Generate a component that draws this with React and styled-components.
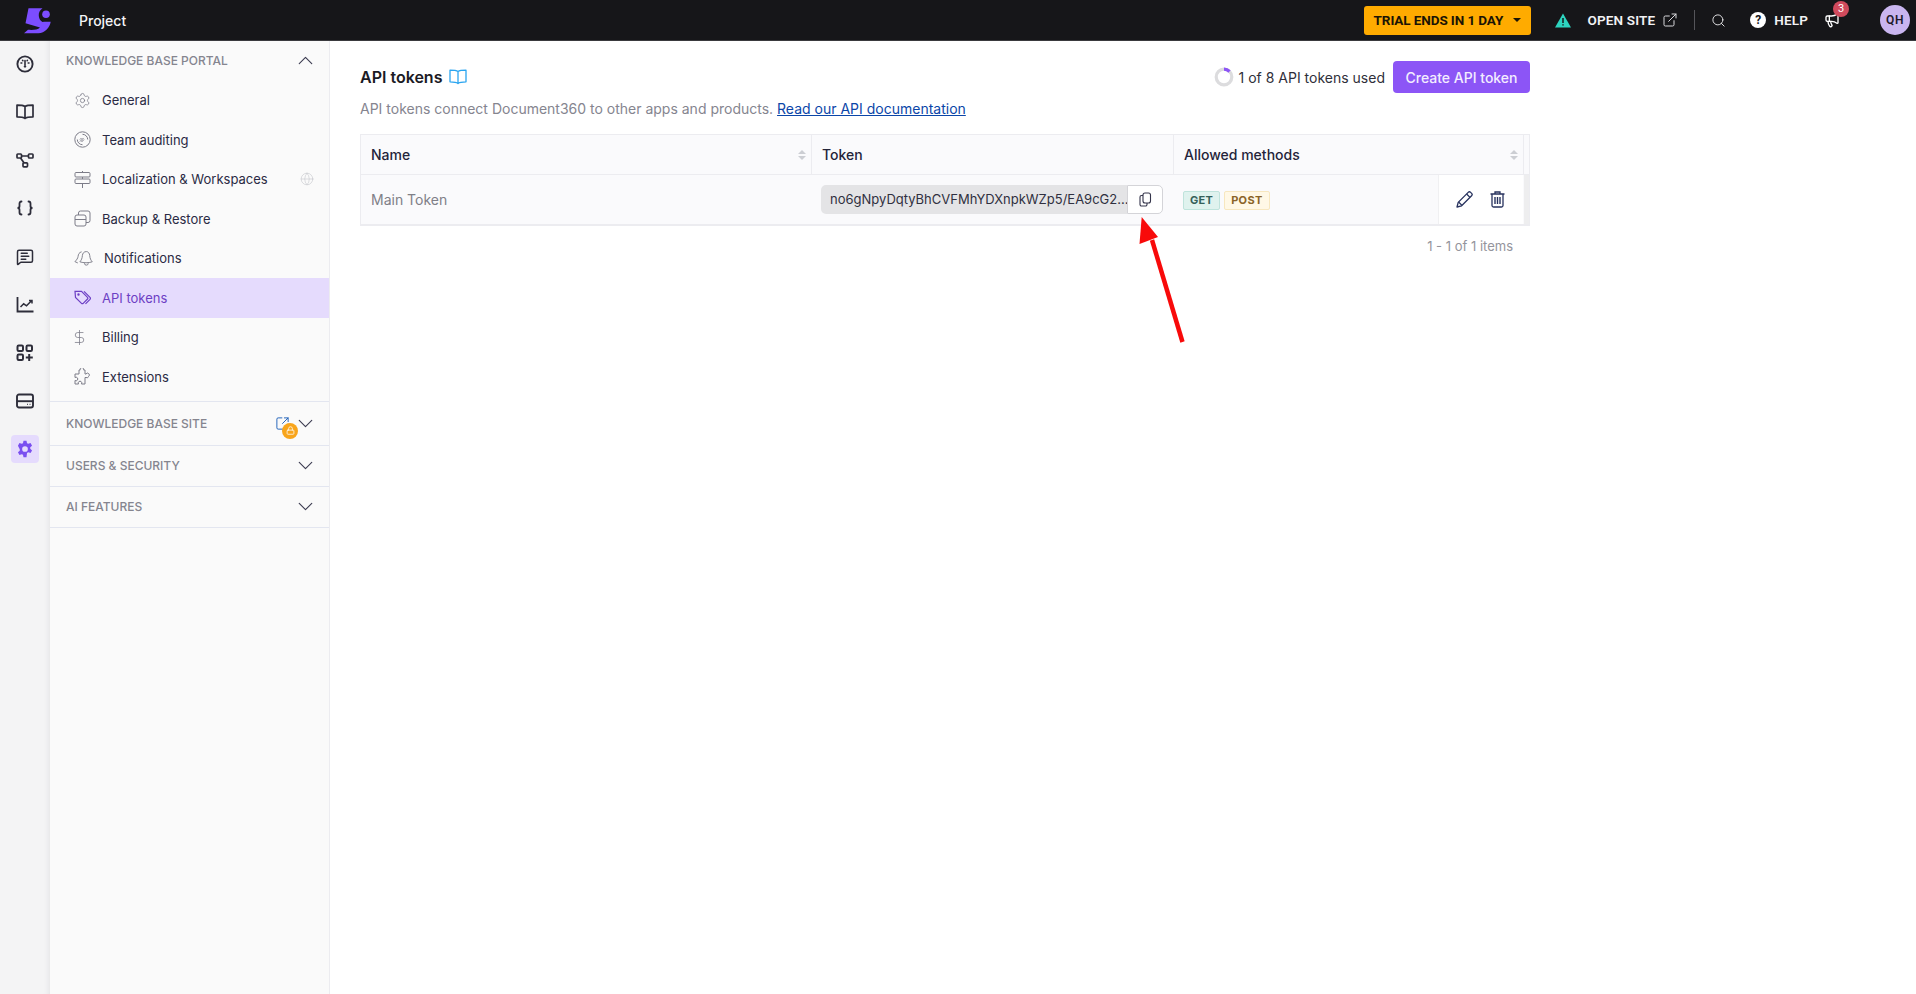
import React from 'react'
import styled, { createGlobalStyle } from 'styled-components'
import {
  MessageSquareText, Search, ExternalLink, ChevronUp, ChevronDown,
  Globe, DollarSign, Megaphone, Settings, SquareArrowOutUpRight, Lock,
} from 'lucide-react'

const GlobalStyle = createGlobalStyle`
  html, body { margin: 0; padding: 0; height: 100%; background: #fff; }
  #root { height: 100%; }
  * { box-sizing: border-box; }
  body { font-family: Inter, "Liberation Sans", sans-serif; color: #2a2a3c; }
`

const Page = styled.div`
  position: relative;
  width: 1916px;
  height: 994px;
  display: flex;
  flex-direction: column;
  overflow: hidden;
`

const TopBar = styled.header`
  height: 41px;
  flex: none;
  background: #161619;
  border-bottom: 1px solid #3a3a3e;
  display: flex;
  align-items: center;
  padding: 0 6px 0 23px;
  color: #fff;
`

const ProjectName = styled.span`
  margin-left: 28px;
  font-size: 14px;
  font-weight: 500;
  color: #f4f4f6;
`

const TopRight = styled.div`
  margin-left: auto;
  display: flex;
  align-items: center;
`

const TrialButton = styled.button`
  width: 167px;
  height: 29px;
  border: none;
  border-radius: 3px;
  background: #ffab00;
  color: #1b1405;
  font: 700 13.5px Roboto, "Liberation Sans", sans-serif;
  letter-spacing: -0.1px;
  display: flex;
  align-items: center;
  justify-content: space-between;
  padding: 0 10px;
  white-space: nowrap;
`

const Caret = styled.i`
  width: 0;
  height: 0;
  border-left: 4px solid transparent;
  border-right: 4px solid transparent;
  border-top: 4px solid #1b1405;
`

const BarLabel = styled.span`
  margin-left: ${p => p.$ml}px;
  font: 600 13.5px Roboto, "Liberation Sans", sans-serif;
  letter-spacing: 0.15px;
  color: #f2f2f4;
  white-space: nowrap;
`

const BarIcon = styled.span`
  display: flex;
  margin-left: ${p => p.$ml}px;
  color: ${p => p.$color || '#fff'};
`

const BarDivider = styled.i`
  width: 1px;
  height: 20px;
  margin-left: 16px;
  background: #55555a;
`

const HelpDot = styled.i`
  width: 16px;
  height: 16px;
  margin-left: 24px;
  border-radius: 50%;
  background: #fff;
  color: #161619;
  font: 700 12px/16px Roboto, sans-serif;
  text-align: center;
`

const BellWrap = styled.span`
  position: relative;
  display: flex;
  margin-left: 16px;
  color: #fff;
`

const Badge = styled.span`
  position: absolute;
  top: -11px;
  left: 9px;
  width: 16px;
  height: 16px;
  border-radius: 50%;
  background: #d04a5c;
  color: #fff;
  font: 400 11px/16px Roboto, sans-serif;
  text-align: center;
`

const Avatar = styled.span`
  width: 30px;
  height: 30px;
  margin-left: 40px;
  border-radius: 50%;
  background: #c9b5ef;
  color: #1d1a2a;
  font: 600 12px/30px Roboto, sans-serif;
  letter-spacing: 0.5px;
  text-align: center;
`

const Body = styled.div`
  flex: 1;
  display: flex;
  min-height: 0;
`

const Rail = styled.nav`
  width: 50px;
  flex: none;
  background: #f4f4f5;
  box-shadow: inset -6px 0 6px -6px #dcdcdf;
  display: flex;
  flex-direction: column;
  align-items: center;
  padding-top: 9px;
  gap: 20.15px;
`

const RailItem = styled.span`
  width: 28px;
  height: 28px;
  border-radius: 4px;
  display: flex;
  align-items: center;
  justify-content: center;
  color: #2d2d3a;
  background: ${p => (p.$active ? '#e5dbfd' : 'transparent')};
`

const Sidebar = styled.aside`
  width: 280px;
  flex: none;
  background: #fafafa;
  border-right: 1px solid #ececf0;
`

const SectionHead = styled.div`
  display: flex;
  align-items: center;
  height: ${p => p.$h}px;
  padding: 0 11px 0 16px;
  border-bottom: ${p => (p.$open ? 'none' : '1px solid #e3e6f0')};
  font-size: 12px;
  font-weight: 500;
  color: #85858f;
`

const SectionIcons = styled.span`
  margin-left: auto;
  display: flex;
  align-items: center;
  color: #3d3d52;
`

const LinkBadge = styled.span`
  position: relative;
  display: flex;
  margin-right: 3px;
  color: #1d5fb8;
`

const LockDot = styled.span`
  position: absolute;
  left: 7px;
  top: 7px;
  width: 16px;
  height: 16px;
  border-radius: 50%;
  background: #f8a51c;
  color: #fff;
  display: flex;
  align-items: center;
  justify-content: center;
`

const MenuList = styled.div`
  padding-bottom: 4px;
  border-bottom: 1px solid #e3e6f0;
`

const MenuRow = styled.div`
  height: 39.5px;
  display: flex;
  align-items: center;
  padding: 0 15px 0 24px;
  gap: 11px;
  font-size: 13px;
  color: ${p => (p.$active ? '#6d3fc4' : '#2a2a44')};
  background: ${p => (p.$active ? '#e5dbfd' : 'transparent')};
  svg { color: ${p => (p.$active ? '#6d3fc4' : '#7c7c88')}; flex: none; }
`

const BillingIcon = styled(DollarSign)`
  margin: 0 3px 0 -3px;
`

const RowTail = styled.span`
  margin-left: auto;
  display: flex;
  svg { color: #c4c6cc; }
`

const Main = styled.main`
  flex: 1;
  padding: 20px 0 0 30px;
`

const Content = styled.div`
  width: 1170px;
`

const TitleRow = styled.div`
  height: 32px;
  display: flex;
  align-items: center;
`

const Title = styled.h1`
  margin: 0 7px 0 0;
  font-size: 16px;
  font-weight: 600;
  color: #1a1a24;
`

const BookLink = styled.span`
  display: flex;
  color: #2aa5f0;
`

const Usage = styled.span`
  margin-left: auto;
  display: flex;
  align-items: center;
  gap: 5px;
  font-size: 14px;
  color: #2f2f3a;
`

const PrimaryButton = styled.button`
  margin-left: 8px;
  width: 137px;
  height: 32px;
  border: none;
  border-radius: 4px;
  background: #8c55f6;
  color: #f3edff;
  font: 500 14px Inter, sans-serif;
`

const Intro = styled.p`
  margin: 6px 0 15px;
  height: 20px;
  font-size: 14px;
  line-height: 20px;
  color: #85858f;
`

const DocLink = styled.a`
  color: #0b46a8;
  text-decoration: underline;
`

const Table = styled.div`
  border: 1px solid #ececf0;
  border-bottom-width: 2px;
  background: #fafafc;
`

const TableRow = styled.div`
  display: grid;
  grid-template-columns: 451px 362px 350px 5px;
  height: ${p => p.$h}px;
  border-bottom: ${p => (p.$head ? '1px solid #ececf0' : 'none')};
`

const HeadCell = styled.div`
  display: flex;
  align-items: center;
  justify-content: space-between;
  padding: 0 5px 0 10px;
  border-right: 1px solid #ececf0;
  font-size: 14px;
  font-weight: 500;
  color: #24243a;
`

const SortIcon = styled.span`
  display: flex;
  flex-direction: column;
  gap: 2px;
  &::before, &::after {
    content: '';
    border-left: 4px solid transparent;
    border-right: 4px solid transparent;
  }
  &::before { border-bottom: 4.5px solid #ccced3; }
  &::after { border-top: 4.5px solid #ccced3; }
`

const NameCell = styled.div`
  display: flex;
  align-items: center;
  padding-left: 10px;
  font-size: 14px;
  color: #7f7f88;
`

const TokenCell = styled.div`
  display: flex;
  align-items: center;
  padding: 0 11px 0 9px;
`

const TokenValue = styled.span`
  flex: 1;
  min-width: 0;
  height: 29px;
  line-height: 28px;
  padding-left: 9px;
  border-radius: 5px 0 0 5px;
  background: #e4e4e6;
  font-size: 13px;
  color: #303040;
  white-space: nowrap;
`

const CopyButton = styled.span`
  width: 36px;
  height: 29px;
  flex: none;
  background: #fff;
  border: 1px solid #d4d4d8;
  border-radius: 0 5px 5px 0;
  display: flex;
  align-items: center;
  justify-content: center;
  color: #34344a;
`

const MethodCell = styled.div`
  display: flex;
  align-items: center;
  justify-content: space-between;
  padding: 0 1px 0 9px;
`

const Methods = styled.span`
  display: flex;
  gap: 4px;
  margin-top: 1px;
`

const Method = styled.span`
  height: 19px;
  padding: 0 6px;
  border-radius: 2px;
  border: 1px solid ${p => (p.$kind === 'get' ? '#bfe3dc' : '#f7e7bf')};
  background: ${p => (p.$kind === 'get' ? '#dff2ee' : '#fff8e6')};
  color: ${p => (p.$kind === 'get' ? '#35605a' : '#8a6428')};
  font-size: 11px;
  font-weight: 700;
  letter-spacing: 0.3px;
  line-height: 17px;
`

const Actions = styled.div`
  width: 85px;
  height: 49px;
  padding-right: 2px;
  background: #fff;
  border-left: 1px solid #f0f0f2;
  display: flex;
  align-items: center;
  justify-content: center;
  gap: 17px;
  color: #27325e;
`

const Gutter = styled.div`
  background: #eeeeef;
`

const Pager = styled.div`
  margin: 12px 17px 0 0;
  text-align: right;
  font-size: 13px;
  color: #94949c;
`

const Arrow = styled.svg`
  position: absolute;
  left: 1130px;
  top: 210px;
`

const GaugeIcon = () => (
  <svg width="18" height="18" viewBox="0 0 18 18" fill="none" stroke="currentColor" strokeWidth="1.9">
    <circle cx="9" cy="9" r="7.6" />
    <path d="M9 5.5v4.5M5 8h.8M12.2 8h.8M6.6 5.4l.3.3M11.4 5.4l-.3.3" strokeWidth="1.6" strokeLinecap="round" />
    <circle cx="9" cy="11.4" r="1.2" fill="currentColor" stroke="none" />
  </svg>
)

const OpenBook = ({ width = 18, height = 16, strokeWidth = 1.7 }) => (
  <svg width={width} height={height} viewBox="0 0 18 16" fill="none" stroke="currentColor" strokeWidth={strokeWidth} strokeLinejoin="round">
    <path d="M9 2.500C7.500 1.500 5 1.200 1 1.200v11.600c4 0 6.500.3 8 1.700 1.500-1.400 4-1.700 8-1.700V1.200c-4 0-6.500.3-8 1.300zM9 2.500v12" />
  </svg>
)

const FlowIcon = () => (
  <svg width="18" height="15" viewBox="0 0 18 15" fill="none" stroke="currentColor" strokeWidth="1.7">
    <rect x="1" y="1" width="4.500" height="4" rx="0.8" />
    <rect x="12.500" y="1" width="4.500" height="4" rx="0.8" />
    <rect x="7" y="9.800" width="4.500" height="4" rx="0.8" />
    <path d="M5.500 3h7M4.500 5l3.500 4.800" />
  </svg>
)

const CurlyIcon = () => (
  <svg width="18" height="16" viewBox="0 0 18 16" fill="none" stroke="currentColor" strokeWidth="1.8" strokeLinecap="round">
    <path d="M5.500 1.500C4 1.500 3.500 2.200 3.500 3.500v2.800C3.500 7.300 2.800 8 1.500 8c1.300 0 2 .7 2 1.700v2.800c0 1.300.5 2 2 2" />
    <path d="M12.500 1.500c1.500 0 2 .7 2 2v2.800c0 1 .7 1.700 2 1.700-1.300 0-2 .7-2 1.700v2.800c0 1.300-.5 2-2 2" />
  </svg>
)

const TrendIcon = () => (
  <svg width="18" height="17" viewBox="0 0 18 17" fill="none" stroke="currentColor" strokeWidth="1.8">
    <path d="M1.500 1v14.500H17.500" />
    <path d="M4.500 11l3.200-3.200 2.800 2 5-5M13 4.500h3v3" strokeWidth="1.500" />
  </svg>
)

const AppsIcon = () => (
  <svg width="18" height="18" viewBox="0 0 18 18" fill="none" stroke="currentColor" strokeWidth="2">
    <rect x="1.500" y="1.500" width="5.500" height="5.500" rx="1.200" />
    <rect x="10.500" y="1.500" width="5.500" height="5.500" rx="1.200" />
    <rect x="1.500" y="10.500" width="5.500" height="5.500" rx="1.200" />
    <path d="M13.200 10v7M9.800 13.400h7" />
  </svg>
)

const DriveIcon = () => (
  <svg width="18" height="16" viewBox="0 0 18 16" fill="none" stroke="currentColor" strokeWidth="1.900">
    <rect x="1" y="1.500" width="16" height="13" rx="2" />
    <path d="M1 8.200h16" />
    <path d="M11 11.400h.8M13.600 11.400h.8" strokeWidth="1.400" />
  </svg>
)

const CogFilled = () => (
  <svg width="18" height="18" viewBox="0 0 24 24" fill="#7a4ff0">
    <path fillRule="evenodd" d="M10 1h4l.7 3.200 1.600.9 3.100-1 2 3.500-2.400 2.200v1.900l2.400 2.200-2 3.500-3.100-1-1.600.9L14 23h-4l-.7-3.200-1.600-.9-3.100 1-2-3.500 2.400-2.200v-1.900L2.600 7.600l2-3.500 3.100 1 1.600-.9zM12 8.200a3.800 3.800 0 1 0 0 7.600 3.800 3.800 0 0 0 0-7.600z" />
  </svg>
)

const Logo = () => (
  <svg width="28" height="27" viewBox="0 0 28 27" fill="#7c4dff">
    <path d="M5.500 1.300h14C16.500 3.500 15.500 6 15.800 9c.3 3 1.700 5 3.700 6l1.500-.3h6.700C27 20 22 26.300 15.300 26.300H1L5 22.800c5 .2 9.500.2 12-2.300L2.500 16.300z" />
    <circle cx="23" cy="7.300" r="3.800" />
  </svg>
)

const AuditIcon = () => (
  <svg width="17" height="17" viewBox="0 0 17 17" fill="none" stroke="currentColor" strokeWidth="1">
    <circle cx="8.500" cy="8.500" r="7.700" />
    <path d="M8.500 3.300a5.200 5.200 0 0 1 5.200 5.200M3.300 8.500a5.200 5.200 0 0 0 5.200 5.200" />
    <path d="M6 10.500l3.500-3.500M7.500 11l2.500-2.500M6 8.500l1.500-1.500" />
  </svg>
)

const LocalizeIcon = () => (
  <svg width="17" height="17" viewBox="0 0 17 17" fill="none" stroke="currentColor" strokeWidth="1">
    <rect x="1" y="1.500" width="15" height="4.500" rx="1" />
    <rect x="1" y="8" width="15" height="4.500" rx="1" />
    <path d="M8.500 0v1.500M8.500 6v2M8.500 12.500V17" />
  </svg>
)

const BackupIcon = () => (
  <svg width="17" height="17" viewBox="0 0 17 17" fill="none" stroke="currentColor" strokeWidth="1">
    <rect x="1" y="5" width="11" height="11" rx="2" />
    <path d="M1 9.500h11M4.500 5V3a2 2 0 0 1 2-2H14a2 2 0 0 1 2 2v7.500a2 2 0 0 1-2 2h-2" />
  </svg>
)

const BellsIcon = () => (
  <svg width="19" height="17" viewBox="0 0 20 17" fill="none" stroke="currentColor" strokeWidth="1">
    <path d="M8 1.500C5.500 2 4.500 4 4.300 6.300 4 8.500 2.800 9.800 1 11.800l3 1.400" />
    <path d="M13 1.200c-2.500 0-4 1.800-4.200 4.300-.2 3-1 4.500-2.600 6.500 4 1.300 9 1.300 13 0-1.600-2-2.400-3.500-2.600-6.500-.2-2.500-1.700-4.300-3.600-4.300z" />
    <path d="M11 13.500a2 2 0 0 0 4 0" />
  </svg>
)

const TagsIcon = () => (
  <svg width="17" height="15" viewBox="0 0 17 15" fill="none" stroke="currentColor" strokeWidth="1.200">
    <path d="M1 1.300h6.500l6 6a1.200 1.200 0 0 1 0 1.700l-4.300 4.300a1.200 1.200 0 0 1-1.700 0L1.500 7.500z" />
    <path d="M10 1.300l6 6a1.500 1.500 0 0 1 0 2l-4.500 4.500" />
    <circle cx="4.500" cy="4.500" r="0.600" />
  </svg>
)

const PuzzleIcon = () => (
  <svg width="17" height="17" viewBox="0 0 17 17" fill="none" stroke="currentColor" strokeWidth="1">
    <path d="M1 6h4V2h1.200a1.800 1.800 0 1 1 3.400 0H11v4h1a1.800 1.800 0 1 1 2.600 2.400 1.800 1.800 0 0 1-2.600 1.100h-1V16H7.500a1.800 1.800 0 1 0-3 0H1v-3.500a1.800 1.800 0 1 0 0-3z" />
  </svg>
)

const CopyIcon = () => (
  <svg width="14" height="15" viewBox="0 0 14 15" fill="none" stroke="currentColor" strokeWidth="1.100">
    <rect x="5" y="1" width="7.500" height="10" rx="2" />
    <path d="M5 3.500H3.500A1.500 1.500 0 0 0 2 5v7.500A1.500 1.500 0 0 0 3.500 14h4A1.500 1.500 0 0 0 9 12.500V11" />
  </svg>
)

const PencilIcon = () => (
  <svg width="17" height="17" viewBox="0 0 17 17" fill="none" stroke="currentColor" strokeWidth="1.300" strokeLinejoin="round">
    <path d="M1 16l1.200-4.600L12.200 1.400a1.700 1.700 0 0 1 2.400 0l1 1a1.700 1.700 0 0 1 0 2.400l-10 10z" />
    <path d="M10.600 3l3.400 3.400M2.600 11l3.400 3.400" />
  </svg>
)

const TrashIcon = () => (
  <svg width="15" height="17" viewBox="0 0 15 17" fill="none" stroke="currentColor" strokeWidth="1.300">
    <path d="M0.500 3h14M5 3V1h5v2M2 3v11.500A1.500 1.500 0 0 0 3.500 16h8a1.500 1.500 0 0 0 1.500-1.500V3" />
    <path d="M5 6v7M7.500 6v7M10 6v7" strokeWidth="1.400" />
  </svg>
)

const AlertIcon = () => (
  <svg width="16" height="15" viewBox="0 0 16 15">
    <path d="M8 0.500L16 14.500H0z" fill="#2dd4bf" />
    <path d="M8 5v5M8 11.200v1.300" stroke="#161619" strokeWidth="1.500" />
  </svg>
)

const App = () => (
  <Page>
    <GlobalStyle />
    <TopBar>
      <Logo />
      <ProjectName>Project</ProjectName>
      <TopRight>
        <TrialButton>TRIAL ENDS IN 1 DAY <Caret /></TrialButton>
        <BarIcon $ml={24}><AlertIcon /></BarIcon>
        <BarLabel $ml={17}>OPEN SITE</BarLabel>
        <BarIcon $ml={7} $color="#d8d8dc"><ExternalLink size={16} strokeWidth={1.500} /></BarIcon>
        <BarDivider />
        <BarIcon $ml={16} $color="#e8e8ea"><Search size={15} strokeWidth={1.500} /></BarIcon>
        <HelpDot>?</HelpDot>
        <BarLabel $ml={8}>HELP</BarLabel>
        <BellWrap>
          <Megaphone size={16} />
          <Badge>3</Badge>
        </BellWrap>
        <Avatar>QH</Avatar>
      </TopRight>
    </TopBar>
    <Body>
      <Rail>
        <RailItem><GaugeIcon /></RailItem>
        <RailItem><OpenBook /></RailItem>
        <RailItem><FlowIcon /></RailItem>
        <RailItem><CurlyIcon /></RailItem>
        <RailItem><MessageSquareText size={18} /></RailItem>
        <RailItem><TrendIcon /></RailItem>
        <RailItem><AppsIcon /></RailItem>
        <RailItem><DriveIcon /></RailItem>
        <RailItem $active><CogFilled /></RailItem>
      </Rail>
      <Sidebar>
        <SectionHead $h={39.5} $open>
          KNOWLEDGE BASE PORTAL
          <SectionIcons><ChevronUp size={25} strokeWidth={1.100} /></SectionIcons>
        </SectionHead>
        <MenuList>
          <MenuRow><Settings size={17} strokeWidth={1.100} />General</MenuRow>
          <MenuRow><AuditIcon />Team auditing</MenuRow>
          <MenuRow><LocalizeIcon />Localization &amp; Workspaces<RowTail><Globe size={14} strokeWidth={1} /></RowTail></MenuRow>
          <MenuRow><BackupIcon />Backup &amp; Restore</MenuRow>
          <MenuRow><BellsIcon />Notifications</MenuRow>
          <MenuRow $active><TagsIcon />API tokens</MenuRow>
          <MenuRow><BillingIcon size={17} strokeWidth={1.100} />Billing</MenuRow>
          <MenuRow><PuzzleIcon />Extensions</MenuRow>
        </MenuList>
        <SectionHead $h={44}>
          KNOWLEDGE BASE SITE
          <SectionIcons>
            <LinkBadge>
              <SquareArrowOutUpRight size={15} strokeWidth={1.500} />
              <LockDot><Lock size={9} /></LockDot>
            </LinkBadge>
            <ChevronDown size={25} strokeWidth={1.100} />
          </SectionIcons>
        </SectionHead>
        <SectionHead $h={41}>
          USERS &amp; SECURITY
          <SectionIcons><ChevronDown size={25} strokeWidth={1.100} /></SectionIcons>
        </SectionHead>
        <SectionHead $h={41}>
          AI FEATURES
          <SectionIcons><ChevronDown size={25} strokeWidth={1.100} /></SectionIcons>
        </SectionHead>
      </Sidebar>
      <Main>
        <Content>
          <TitleRow>
            <Title>API tokens</Title>
            <BookLink><OpenBook strokeWidth={1.300} /></BookLink>
            <Usage>
              <svg width="20" height="20" viewBox="0 0 20 20" fill="none" strokeWidth="3.200">
                <circle cx="10" cy="10" r="7.800" stroke="#dcdcde" />
                <path d="M10 2.200a7.800 7.800 0 0 1 5.500 2.300" stroke="#8c55f6" />
              </svg>
              1 of 8 API tokens used
            </Usage>
            <PrimaryButton>Create API token</PrimaryButton>
          </TitleRow>
          <Intro>
            API tokens connect Document360 to other apps and products. <DocLink>Read our API documentation</DocLink>
          </Intro>
          <Table>
            <TableRow $h={40} $head>
              <HeadCell>Name<SortIcon /></HeadCell>
              <HeadCell>Token</HeadCell>
              <HeadCell>Allowed methods<SortIcon /></HeadCell>
              <div />
            </TableRow>
            <TableRow $h={49}>
              <NameCell>Main Token</NameCell>
              <TokenCell>
                <TokenValue>no6gNpyDqtyBhCVFMhYDXnpkWZp5/EA9cG2...</TokenValue>
                <CopyButton><CopyIcon /></CopyButton>
              </TokenCell>
              <MethodCell>
                <Methods>
                  <Method $kind="get">GET</Method>
                  <Method $kind="post">POST</Method>
                </Methods>
                <Actions>
                  <PencilIcon />
                  <TrashIcon />
                </Actions>
              </MethodCell>
              <Gutter />
            </TableRow>
          </Table>
          <Pager>1 - 1 of 1 items</Pager>
        </Content>
      </Main>
    </Body>
    <Arrow width="60" height="140" viewBox="0 0 60 140">
      <path d="M52.500 132 L22 30" stroke="#f80a0a" strokeWidth="4.500" />
      <path d="M11.700 7 L9.500 34 L28 27 Z" fill="#f80a0a" />
    </Arrow>
  </Page>
)

export default App
